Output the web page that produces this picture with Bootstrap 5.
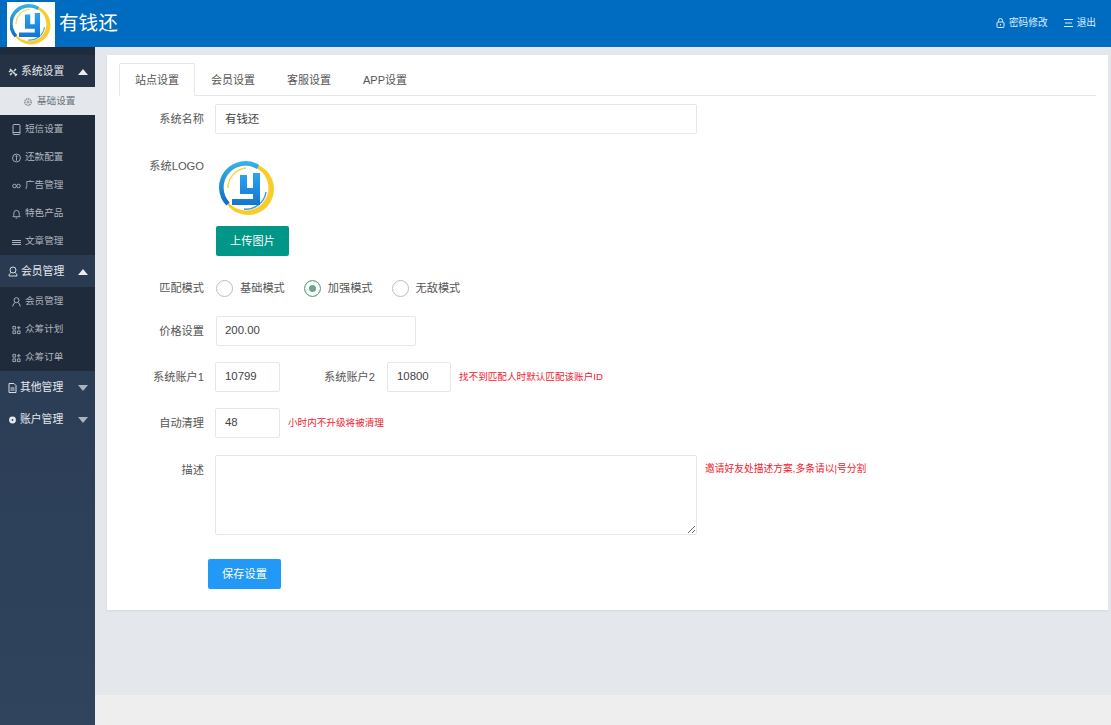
<!DOCTYPE html>
<html lang="zh-CN">
<head>
<meta charset="UTF-8">
<title>有钱还</title>
<link href="https://cdn.jsdelivr.net/npm/bootstrap@5.3.0/dist/css/bootstrap.min.css" rel="stylesheet">
<style>
html, body { height: 725px; overflow: hidden; }
body { font-family: "Liberation Sans", "Noto Sans CJK SC", sans-serif; font-size: 11.2px; color: #555; background: #e4e8ed; }
svg { flex: none; }

.top-bar { height: 47px; background: #006cc1; color: #fff; padding-left: 7px; padding-right: 15px; }
.logo-box { width: 48px; height: 45px; margin-top: 2px; background: #fff; }
.app-title { font-size: 19.6px; margin-left: 4px; }
.top-links { margin-top: -1px; }
.top-link { font-size: 9.7px; color: #dcecff; margin-left: 16px; gap: 4px; }

.page-body { height: 678px; }
.side-menu { width: 95px; padding-top: 8px; background: linear-gradient(#1f2a3b, #2b3d55 45%, #30445e); flex: none; }
.menu-head { height: 32px; padding: 1px 7px 0 8px; color: #e6e9ee; font-size: 10.8px; gap: 3px; }
.menu-head.is-open { background: #253144; }
.menu-head.is-open.second { background: #2a3a50; }
.menu-sub { height: 28px; padding: 1px 0 0 12px; color: #aeb5bf; font-size: 9.6px; gap: 4px; background: #1f2a3a; }
.menu-sub.is-active { background: #e4e8ed; color: #6a7078; padding-left: 23px; }
.caret-up, .caret-down { margin-left: auto; width: 0; height: 0; border-left: 5.5px solid transparent; border-right: 5.5px solid transparent; }
.caret-up { border-bottom: 6px solid #e8ebef; }
.caret-down { border-top: 6px solid #a9b3c0; }

.main-area { min-width: 0; }
.main-scroll { padding: 8px 3px 0 12px; height: 648px; }
.panel { height: 555px; background: #fff; padding: 8px 12px; box-shadow: 0 1px 2px rgba(0,0,0,.07); }
.bottom-strip { height: 30px; background: #eee; }

.tab-row { height: 33px; border-bottom-color: #e6e6e6; }
.tab-row .nav-link { height: 33px; padding: 0 15px; line-height: 32px; font-size: 11px; color: #555; border-radius: 2px 2px 0 0; }
.tab-row .nav-link.active { color: #555; border-color: #e6e6e6 #e6e6e6 #fff; }

.field-row { display: flex; align-items: center; }
.field-label { width: 85px; margin-right: 11px; text-align: right; flex: none; color: #555; }
.plain-input { height: 30px; border: 1px solid #e6e6e6; border-radius: 2px; padding: 0 9px 2px; font-size: 11.4px; color: #444; box-shadow: none; }
.plain-input:focus { border-color: #e6e6e6; box-shadow: none; }
.input-long { width: 482px; flex: none; }
.input-mid { width: 200px; margin-left: 1px; padding-left: 8px; }
.input-short { width: 65px; flex: none; }
.input-second { width: 64px; }
.red-hint { color: #f3202f; font-size: 9.6px; margin-left: 8px; }
.row-name { margin-top: 8px; }
.row-logo { margin-top: 25px; align-items: flex-start; }
.row-logo .field-label { line-height: 16px; margin-top: -1px; }
.logo-pic { margin-top: -4px; display: block; }
.upload-btn { width: 73px; height: 30px; margin: 3px 0 0 1px; display: block; background: #009688; border: 0; border-radius: 2px; color: #fff; font-size: 11.2px; padding: 0; }
.row-match { margin-top: 24px; height: 17px; }
.match-choice { gap: 7px; margin-right: 19px; }
.match-choice:first-of-type { margin-left: 1px; }
.match-radio.form-check-input { width: 17px; height: 17px; margin: 0; border: 1px solid #bdbdbd; background-color: #fff; background-image: none; float: none; }
.match-radio.form-check-input:checked { background-color: #6aa883; background-image: none; border: 1px solid #5fae7f; box-shadow: inset 0 0 0 4px #fff; }
.row-price { margin-top: 19px; }
.row-accounts { margin-top: 16px; }
.row-clean { margin-top: 16px; }
.row-desc { margin-top: 17px; align-items: flex-start; }
.row-desc .field-label { margin-top: 7px; }
.row-desc .red-hint { margin-top: 7px; font-size: 9.75px; }
.desc-box { width: 482px; height: 80px; flex: none; }
.second-label { margin-left: 44px; margin-right: 12px; color: #555; }
.save-btn { width: 73px; height: 30px; margin-left: 89px; margin-top: 24px; background: #2299f6; border: 0; border-radius: 2px; color: #fff; font-size: 11.2px; padding: 0; display: block; }
</style>
</head>
<body>
<svg width="0" height="0" class="position-absolute">
  <defs>
    <linearGradient id="ringBlue" x1="0" y1="0" x2="0" y2="1"><stop offset="0" stop-color="#33b0ea"/><stop offset="1" stop-color="#0f6fc6"/></linearGradient>
    <linearGradient id="letterBlue" x1="0" y1="0" x2="0" y2="1"><stop offset="0" stop-color="#2ba5f0"/><stop offset="1" stop-color="#1375cf"/></linearGradient>
    <symbol id="brandLogo" viewBox="0 0 65 68">
      <circle cx="33" cy="34" r="26" fill="#f8cd2a"/>
      <circle cx="31" cy="33" r="22.500" fill="#fff"/>
      <path d="M13 49A24 24 0 0 1 43 12" fill="none" stroke="url(#ringBlue)" stroke-width="4.500"/>
      <path d="M13 33A20 20 0 0 1 31 13" fill="none" stroke="#f9d649" stroke-width="1.500"/>
      <path d="M51 37A20 20 0 0 1 29 54" fill="none" stroke="#3aa0e0" stroke-width="1.500"/>
      <path d="M25 20h7v13h6V18h7v32H17v-6h21v-5H25Z" fill="url(#letterBlue)"/>
    </symbol>
  </defs>
</svg>

<header class="top-bar d-flex align-items-start">
  <div class="logo-box d-flex align-items-center justify-content-center"><svg width="42" height="42" viewBox="5 6 56 56"><use href="#brandLogo" width="65" height="68"/></svg></div>
  <div class="app-title align-self-center ms-1">有钱还</div>
  <div class="top-links ms-auto align-self-center d-flex">
    <span class="top-link d-flex align-items-center">
      <svg width="9" height="10" viewBox="0 0 9 10" fill="none" stroke="#dcecff"><rect x="1" y="4" width="7" height="5.500" rx="1"/><path d="M2.500 4V2.500a2 2 0 0 1 4 0V4M4.500 6v1.500"/></svg>密码修改
    </span>
    <span class="top-link d-flex align-items-center">
      <svg width="9" height="8" viewBox="0 0 9 8" stroke="#dcecff"><path d="M0 .5h9M1 4h7M0 7.500h9"/></svg>退出
    </span>
  </div>
</header>

<div class="page-body d-flex">
  <nav class="side-menu">
    <div class="menu-head is-open d-flex align-items-center">
      <svg width="10" height="10" viewBox="0 0 10 10" stroke="#d8dde4" stroke-width="1.500" fill="none"><path d="M2 2l6 6M8 2L6 4M2 8l2-2M1 5l2-2M7 9l2-2"/></svg>系统设置<span class="caret-up"></span>
    </div>
    <div class="menu-sub is-active d-flex align-items-center">
      <svg width="10" height="10" viewBox="0 0 10 10" fill="none" stroke="#8c929a" stroke-width="1.500"><circle cx="5" cy="5" r="3.200" stroke-dasharray="1.500 .6"/><circle cx="5" cy="5" r="1" stroke-width="1"/></svg>基础设置
    </div>
    <div class="menu-sub d-flex align-items-center">
      <svg width="9" height="11" viewBox="0 0 9 11" fill="none" stroke="#aeb5bf"><rect x="1" y=".5" width="7" height="10" rx="1"/><path d="M1 8.500h7"/></svg>短信设置
    </div>
    <div class="menu-sub d-flex align-items-center">
      <svg width="9" height="10" viewBox="0 0 10 10" fill="none" stroke="#aeb5bf"><circle cx="5" cy="5" r="4.400"/><path d="M5 4v4M3.800 3h2.400M5 2v1.500"/></svg>还款配置
    </div>
    <div class="menu-sub d-flex align-items-center">
      <svg width="9" height="10" viewBox="0 0 10 10" fill="none" stroke="#aeb5bf"><circle cx="2.800" cy="5" r="2"/><circle cx="7.200" cy="5" r="2"/></svg>广告管理
    </div>
    <div class="menu-sub d-flex align-items-center">
      <svg width="9" height="10" viewBox="0 0 10 10" fill="none" stroke="#aeb5bf"><path d="M1 8h8L8 6.500V4a3 3 0 0 0-6 0v2.500ZM4 9.500h2"/></svg>特色产品
    </div>
    <div class="menu-sub d-flex align-items-center">
      <svg width="9" height="10" viewBox="0 0 9 10" stroke="#aeb5bf"><path d="M0 3.500h9M0 5.500h9M0 7.500h9"/></svg>文章管理
    </div>
    <div class="menu-head is-open second d-flex align-items-center">
      <svg width="10" height="11" viewBox="0 0 10 11" fill="none" stroke="#d8dde4"><circle cx="5" cy="4" r="3"/><path d="M1 10c0-2 1-3 2.500-3.500M9 10c0-2-1-3-2.500-3.500M1 10h8"/></svg>会员管理<span class="caret-up"></span>
    </div>
    <div class="menu-sub d-flex align-items-center">
      <svg width="9" height="10" viewBox="0 0 9 10" fill="none" stroke="#aeb5bf"><circle cx="4.500" cy="3.200" r="2.500"/><path d="M.8 9.500c.2-2 1.200-3.500 2.400-3.800M8.200 9.500c-.2-2-1.200-3.500-2.400-3.800"/></svg>会员管理
    </div>
    <div class="menu-sub d-flex align-items-center">
      <svg width="9" height="10" viewBox="0 0 10 10" fill="none" stroke="#aeb5bf"><path d="M1 1h3v3H1zM1 6h3v3H1zM6 6h3v3H6zM7.500 .5v4M5.500 2.500h4"/></svg>众筹计划
    </div>
    <div class="menu-sub d-flex align-items-center">
      <svg width="9" height="10" viewBox="0 0 10 10" fill="none" stroke="#aeb5bf"><path d="M1 1h3v3H1zM1 6h3v3H1zM6 6h3v3H6zM7.500 .5v4M5.500 2.500h4"/></svg>众筹订单
    </div>
    <div class="menu-head d-flex align-items-center">
      <svg width="9" height="10" viewBox="0 0 9 10" fill="none" stroke="#d8dde4"><path d="M1 .5h5l2 2v7H1zM2.500 5h4M2.500 7h4"/></svg>其他管理<span class="caret-down"></span>
    </div>
    <div class="menu-head d-flex align-items-center">
      <svg width="9" height="10" viewBox="0 0 10 10" fill="#e6e9ee"><circle cx="5" cy="5" r="3.800"/><circle cx="5" cy="5" r="1" fill="#2d3f56"/></svg>账户管理<span class="caret-down"></span>
    </div>
  </nav>

  <div class="main-area flex-grow-1">
    <div class="main-scroll">
      <div class="panel">
        <ul class="nav nav-tabs tab-row">
          <li class="nav-item"><a class="nav-link active" href="#">站点设置</a></li>
          <li class="nav-item"><a class="nav-link" href="#">会员设置</a></li>
          <li class="nav-item"><a class="nav-link" href="#">客服设置</a></li>
          <li class="nav-item"><a class="nav-link" href="#">APP设置</a></li>
        </ul>
        <form>
          <div class="field-row row-name">
            <label class="field-label">系统名称</label>
            <input class="form-control plain-input input-long" value="有钱还">
          </div>
          <div class="field-row row-logo">
            <label class="field-label">系统LOGO</label>
            <div>
              <svg class="logo-pic" width="65" height="68"><use href="#brandLogo" width="65" height="68"/></svg>
              <button type="button" class="btn upload-btn">上传图片</button>
            </div>
          </div>
          <div class="field-row row-match">
            <label class="field-label">匹配模式</label>
            <span class="match-choice d-flex align-items-center"><input type="radio" class="form-check-input match-radio" name="mode">基础模式</span>
            <span class="match-choice d-flex align-items-center"><input type="radio" class="form-check-input match-radio" name="mode" checked>加强模式</span>
            <span class="match-choice d-flex align-items-center"><input type="radio" class="form-check-input match-radio" name="mode">无敌模式</span>
          </div>
          <div class="field-row row-price">
            <label class="field-label">价格设置</label>
            <input class="form-control plain-input input-mid" value="200.00">
          </div>
          <div class="field-row row-accounts">
            <label class="field-label">系统账户1</label>
            <input class="form-control plain-input input-short" value="10799">
            <label class="second-label">系统账户2</label>
            <input class="form-control plain-input input-short input-second" value="10800">
            <span class="red-hint">找不到匹配人时默认匹配该账户ID</span>
          </div>
          <div class="field-row row-clean">
            <label class="field-label">自动清理</label>
            <input class="form-control plain-input input-short" value="48">
            <span class="red-hint">小时内不升级将被清理</span>
          </div>
          <div class="field-row row-desc">
            <label class="field-label">描述</label>
            <textarea class="form-control plain-input desc-box"></textarea>
            <span class="red-hint">邀请好友处描述方案,多条请以|号分割</span>
          </div>
          <button type="button" class="btn save-btn">保存设置</button>
        </form>
      </div>
    </div>
    <div class="bottom-strip"></div>
  </div>
</div>
<script src="https://cdn.jsdelivr.net/npm/bootstrap@5.3.0/dist/js/bootstrap.bundle.min.js"></script>
</body>
</html>
